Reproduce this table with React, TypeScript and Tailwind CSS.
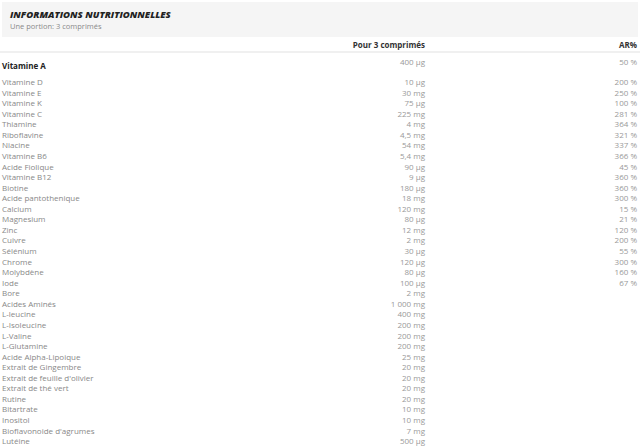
const rows: [string, string, string][] = [
  ['Vitamine D', '10 µg', '200 %'],
  ['Vitamine E', '30 mg', '250 %'],
  ['Vitamine K', '75 µg', '100 %'],
  ['Vitamine C', '225 mg', '281 %'],
  ['Thiamine', '4 mg', '364 %'],
  ['Riboflavine', '4,5 mg', '321 %'],
  ['Niacine', '54 mg', '337 %'],
  ['Vitamine B6', '5,4 mg', '366 %'],
  ['Acide Fiolique', '90 µg', '45 %'],
  ['Vitamine B12', '9 µg', '360 %'],
  ['Biotine', '180 µg', '360 %'],
  ['Acide pantothenique', '18 mg', '300 %'],
  ['Calcium', '120 mg', '15 %'],
  ['Magnesium', '80 µg', '21 %'],
  ['Zinc', '12 mg', '120 %'],
  ['Cuivre', '2 mg', '200 %'],
  ['Sélénium', '30 µg', '55 %'],
  ['Chrome', '120 µg', '300 %'],
  ['Molybdène', '80 µg', '160 %'],
  ['Iode', '100 µg', '67 %'],
  ['Bore', '2 mg', ''],
  ['Acides Aminés', '1 000 mg', ''],
  ['L-leucine', '400 mg', ''],
  ['L-Isoleucine', '200 mg', ''],
  ['L-Valine', '200 mg', ''],
  ['L-Glutamine', '200 mg', ''],
  ['Acide Alpha-Lipoique', '25 mg', ''],
  ['Extrait de Gingembre', '20 mg', ''],
  ["Extrait de feuille d'olivier", '20 mg', ''],
  ['Extrait de thé vert', '20 mg', ''],
  ['Rutine', '20 mg', ''],
  ['Bitartrate', '10 mg', ''],
  ['Inositol', '10 mg', ''],
  ["Bioflavonoide d'agrumes", '7 mg', ''],
  ['Lutéine', '500 µg', ''],
];

export default function App() {
  return (
    <div className="w-[640px] h-[446px] overflow-hidden bg-white font-['Open_Sans',sans-serif]">
      <div className="mx-[2px] mt-[2px] h-[35px] bg-[#f5f5f5] px-[8px] pt-[7px]">
        <h2 className="text-[9.5px] leading-[12px] font-extrabold italic uppercase text-[#222]">
          Informations nutritionnelles
        </h2>
        <p className="text-[7.5px] leading-[11px] text-[#8a8a8a]">Une portion: 3 comprimés</p>
      </div>

      <div className="grid grid-cols-[1fr_125px_215px] pt-[2px] border-b-2 border-[#f0f0f0] text-[8px] leading-[12px] font-bold text-[#333]">
        <div />
        <div className="text-right">Pour 3 comprimés</div>
        <div className="text-right pr-[3px]">AR%</div>
      </div>

      <div className="grid grid-cols-[1fr_125px_215px] items-start h-[24px] text-[8px] leading-[10.56px]">
        <div className="pl-[2px] pt-[8px] font-bold text-[#222]">Vitamine A</div>
        <div className="pt-[4px] text-right text-[#999]">400 µg</div>
        <div className="pt-[4px] pr-[3px] text-right text-[#999]">50 %</div>
      </div>

      <div className="flex flex-col text-[8px] leading-[10.56px]">
        {rows.map(([name, qty, ar]) => (
          <div key={name} className="grid grid-cols-[1fr_125px_215px]">
            <div className="pl-[2px] text-[#888] whitespace-nowrap">{name}</div>
            <div className="text-right text-[#999]">{qty}</div>
            <div className="pr-[3px] text-right text-[#999]">{ar}</div>
          </div>
        ))}
      </div>
    </div>
  );
}
